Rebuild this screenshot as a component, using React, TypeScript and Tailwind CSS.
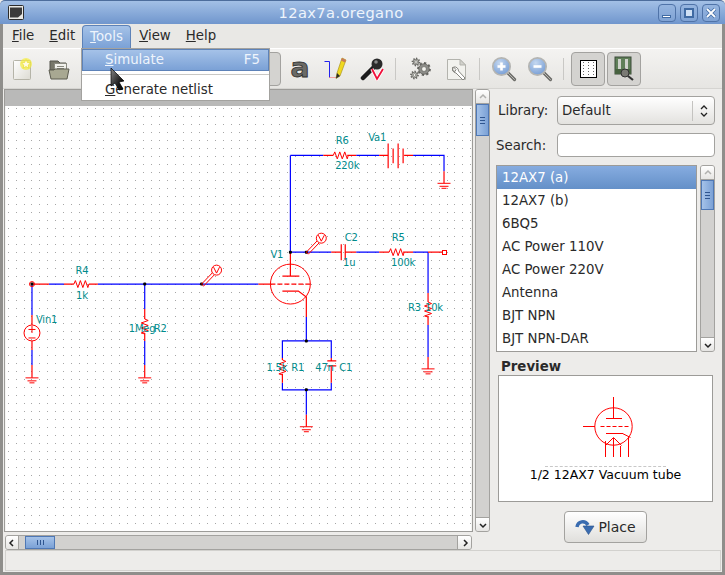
import { ReactNode } from "react";

const parts = [
  "12AX7 (a)",
  "12AX7 (b)",
  "6BQ5",
  "AC Power 110V",
  "AC Power 220V",
  "Antenna",
  "BJT NPN",
  "BJT NPN-DAR",
];

const RED = "#ff0000";
const BLUE = "#0000ff";
const TEAL = "#008b8b";

function Chevron({ dir }: { dir: "up" | "down" | "left" | "right" }) {
  const d = {
    up: "M2 6 L5 3 L8 6",
    down: "M2 4 L5 7 L8 4",
    left: "M6 2 L3 5 L6 8",
    right: "M4 2 L7 5 L4 8",
  }[dir];
  return (
    <svg width="10" height="10" viewBox="0 0 10 10">
      <path d={d} fill="none" stroke={dir === "up" ? "#b0b0ae" : "#222"} strokeWidth="1.5" />
    </svg>
  );
}

function VScroll({ top, height, grip = true }: { top: number; height: number; grip?: boolean }) {
  return (
    <div className="flex w-[15px] flex-col self-stretch overflow-hidden rounded-[3px] border border-[#a3a29f] bg-[#d2d1cf]">
      <div className="flex h-[14px] shrink-0 items-center justify-center border-b border-[#a3a29f] bg-linear-to-b from-white to-[#e6e5e3]">
        <Chevron dir="up" />
      </div>
      <div className="flex-1" style={{ paddingTop: top }}>
        <div
          className="flex flex-col items-center justify-center gap-[2px] border border-[#4f78b5] bg-linear-to-r from-[#a5c2e8] to-[#7ba1d6]"
          style={{ height }}
        >
          {grip && (
            <>
              <div className="h-px w-[5px] bg-[#2f558f]" />
              <div className="h-px w-[5px] bg-[#2f558f]" />
              <div className="h-px w-[5px] bg-[#2f558f]" />
            </>
          )}
        </div>
      </div>
      <div className="flex h-[14px] shrink-0 items-center justify-center border-t border-[#a3a29f] bg-linear-to-b from-white to-[#e6e5e3]">
        <Chevron dir="down" />
      </div>
    </div>
  );
}

function HScroll() {
  return (
    <div className="ml-px flex h-[15px] w-[467px] overflow-hidden rounded-[3px] border border-[#a3a29f] bg-[#d2d1cf]">
      <div className="flex w-[13px] shrink-0 items-center justify-center border-r border-[#a3a29f] bg-linear-to-b from-white to-[#e6e5e3]">
        <Chevron dir="left" />
      </div>
      <div className="ml-[6px] flex w-[30px] items-center justify-center gap-[2px] border border-[#4f78b5] bg-linear-to-b from-[#a5c2e8] to-[#7ba1d6]">
        <div className="h-[5px] w-px bg-[#2f558f]" />
        <div className="h-[5px] w-px bg-[#2f558f]" />
        <div className="h-[5px] w-px bg-[#2f558f]" />
      </div>
      <div className="flex-1" />
      <div className="flex w-[14px] shrink-0 items-center justify-center border-l border-[#a3a29f] bg-linear-to-b from-white to-[#e6e5e3]">
        <Chevron dir="right" />
      </div>
    </div>
  );
}

function Ground({ x, y }: { x: number; y: number }) {
  return (
    <path
      d={`M${x - 6.5} ${y}H${x + 6.5}M${x - 4.5} ${y + 3}H${x + 4.5}M${x - 2.5} ${y + 5}H${x + 2.5}`}
      stroke={RED}
      fill="none"
    />
  );
}

function ZigH({ x, y }: { x: number; y: number }) {
  return (
    <path
      d={`M${x} ${y}l1.5 -3.5l2.5 7l2.5 -7l2.5 7l2.5 -7l2.5 7l1 -3.5`}
      stroke={RED}
      fill="none"
    />
  );
}

function ZigV({ x, y }: { x: number; y: number }) {
  return (
    <path
      d={`M${x} ${y}l3.5 1.5l-7 2.5l7 2.5l-7 2.5l7 2.5l-7 2.5l3.5 1`}
      stroke={RED}
      fill="none"
    />
  );
}

function Junction({ x, y }: { x: number; y: number }) {
  return <rect x={x - 1.5} y={y - 1.5} width="3" height="3" rx="1" fill="#000" />;
}

function Probe({ x, y }: { x: number; y: number }) {
  return (
    <g stroke={RED} fill="none">
      <path d={`M${x} ${y}l11 -11.500M${x + 2} ${y + 2}l11 -11.500M${x} ${y}l2 2`} />
      <circle cx={x + 15} cy={y - 14} r="5" fill="#fff" />
      <path d={`M${x + 12} ${y - 17}l3 6l3 -6`} />
    </g>
  );
}

function Label({ x, y, children, anchor = "start" }: { x: number; y: number; children: ReactNode; anchor?: "start" | "middle" }) {
  return (
    <text x={x} y={y} fill={TEAL} fontSize="10" letterSpacing="-0.2" textAnchor={anchor}>
      {children}
    </text>
  );
}

const dotRows = Array.from({ length: 53 }, (_, i) => 108 + i * 8);

function Schematic() {
  // coordinates are window pixels, the viewBox offset puts integer values on pixel centres
  const blueWires =
    "M48 284H63M97 284H258M31 284V315M31 350V365M144 284V309M144 341V365" +
    "M290 155V252M290 155H323M356 155H379M413 155H444V171" +
    "M290 252H331M356 252H379M413 252H428M428 252V293M428 325V357" +
    "M306 317V341M282 358V341H331V358M282 383V390H331V383M306 390V415";
  const redWires =
    "M31 284H48M63 284H73M88 284H97M31 315V325M31 341V350M31 365V378" +
    "M144 309V319M144 333V341M144 365V378" +
    "M323 155H333M347 155H356M379 155H388M404 155H413M444 171V183" +
    "M388 143V168M393 148V163M398 143V168M403 148V163" +
    "M331 252H341M345 252H356M341 244V260M345 244V260" +
    "M379 252H389M403 252H413M428 252H442M428 293V302M428 316V325M428 357V369" +
    "M290 252V276M282 276H299M258 284H270M282 291H298L306 297V317" +
    "M282 358V360M282 374V383M331 358V361M327 361H336M327 366H336M331 366V383M306 415V427";
  return (
    <svg className="block h-[426px] w-[467px]" viewBox="4.5 105.500 467 426" fontFamily="'DejaVu Sans', sans-serif">
      <rect x="4.5" y="105.500" width="467" height="426" fill="#fff" />
      <g stroke="#a6a6a6" strokeDasharray="1 7" shapeRendering="crispEdges">
        {dotRows.map((y) => (
          <path key={y} d={`M6.500 ${y}H472`} />
        ))}
      </g>

      <path d={blueWires} stroke={BLUE} strokeWidth="1.200" fill="none" />
      <path d={redWires} stroke={RED} strokeWidth="1.200" fill="none" />
      <path d="M270 284H311" stroke={RED} strokeWidth="1.200" fill="none" strokeDasharray="5 2" />

      <circle cx="290" cy="284" r="20" stroke={RED} fill="none" />
      <circle cx="31" cy="333" r="8" stroke={RED} fill="none" />
      <path d="M27.500 329.500h7M31 326v7M27.500 338h7" stroke={RED} fill="none" />
      <circle cx="31" cy="284" r="2.500" stroke={RED} fill="none" />
      <rect x="442" y="250" width="4" height="4" stroke={RED} fill="none" shapeRendering="crispEdges" />

      <ZigH x={73} y={284} />
      <ZigH x={333} y={155} />
      <ZigH x={389} y={252} />
      <ZigV x={144} y={319} />
      <ZigV x={428} y={302} />
      <ZigV x={282} y={360} />

      <Ground x={31} y={378} />
      <Ground x={144} y={378} />
      <Ground x={444} y={183} />
      <Ground x={428} y={369} />
      <Ground x={306} y={427} />

      <Junction x={31} y={284} />
      <Junction x={144} y={284} />
      <Junction x={201} y={284} />
      <Junction x={290} y={252} />
      <Junction x={306} y={252} />
      <Junction x={306} y={341} />
      <Junction x={306} y={390} />

      <Probe x={201} y={284} />
      <Probe x={306} y={252} />

      <Label x={81} y={274} anchor="middle">R4</Label>
      <Label x={81} y={299} anchor="middle">1k</Label>
      <Label x={35} y={323}>Vin1</Label>
      <Label x={128} y={332}>1Meg</Label>
      <Label x={153} y={332}>R2</Label>
      <Label x={342} y={144} anchor="middle">R6</Label>
      <Label x={347} y={169} anchor="middle">220k</Label>
      <Label x={368} y={141}>Va1</Label>
      <Label x={270} y={258}>V1</Label>
      <Label x={351} y={241} anchor="middle">C2</Label>
      <Label x={349} y={266} anchor="middle">1u</Label>
      <Label x={398} y={241} anchor="middle">R5</Label>
      <Label x={403} y={266} anchor="middle">100k</Label>
      <Label x={408} y={311}>R3</Label>
      <Label x={425} y={311}>10k</Label>
      <Label x={266} y={371}>1.5k</Label>
      <Label x={291} y={371}>R1</Label>
      <Label x={315} y={371}>47n</Label>
      <Label x={339} y={371}>C1</Label>
    </svg>
  );
}

function NewIcon() {
  return (
    <svg width="24" height="24" viewBox="0 0 24 24">
      <defs>
        <linearGradient id="pg" x1="0" y1="0" x2="1" y2="1">
          <stop offset="0" stopColor="#fff" />
          <stop offset="1" stopColor="#dcdbd2" />
        </linearGradient>
      </defs>
      <rect x="2.500" y="3.500" width="17" height="19" rx="1" fill="url(#pg)" stroke="#b5b4a8" />
      <circle cx="15" cy="7" r="6" fill="#f5ee3c" opacity="0.7" />
      <path d="M15 2.500l1.400 3 3.100.4-2.300 2.100.6 3.100-2.800-1.600-2.800 1.600.6-3.100-2.300-2.100 3.100-.4z" fill="#fffbe0" stroke="#e8d820" strokeWidth="0.6" />
    </svg>
  );
}

function FolderIcon() {
  return (
    <svg width="24" height="24" viewBox="0 0 24 24">
      <path d="M3 4h8l2 2h6v7H3z" fill="#77776a" stroke="#55554c" />
      <rect x="7.500" y="6.500" width="12" height="10" fill="#f1f1ec" stroke="#8a8a80" />
      <path d="M10 9.500h7M10 11.500h7M10 13.500h7" stroke="#8a8a80" />
      <path d="M2 13h5l1 -1h14l-2 10H4z" fill="#a8a892" stroke="#5c5c50" />
    </svg>
  );
}

function LetterIcon() {
  return (
    <svg width="26" height="26" viewBox="0 0 26 26" className="overflow-visible">
      <text x="13" y="21" textAnchor="middle" fontSize="26" fontWeight="700" textLength="19" lengthAdjust="spacingAndGlyphs" fontFamily="'DejaVu Sans', sans-serif" fill="#6a6a66" stroke="#2f2f2d" strokeWidth="0.8">
        a
      </text>
    </svg>
  );
}

function WireIcon() {
  return (
    <svg width="24" height="24" viewBox="0 0 24 24">
      <path d="M0.500 4.500H5.500V20.500" fill="none" stroke="#2222ee" />
      <path d="M5.500 20.500H13" fill="none" stroke="#ff5555" strokeDasharray="1 1" />
      <path d="M18 1l4 2L16 19l-4 2.500L13 16z" fill="#f0d820" stroke="#a08a10" strokeWidth="0.6" />
      <path d="M18 1l4 2-1 2.500-4-2z" fill="#c87a5a" />
      <path d="M13 16l3 3-4 2.500z" fill="#2c2c2c" />
    </svg>
  );
}

function ProbeIcon() {
  return (
    <svg width="24" height="24" viewBox="0 0 24 24">
      <path d="M3 21L14 10" stroke="#1c1c1c" strokeWidth="4.500" strokeLinecap="round" />
      <circle cx="17" cy="7" r="5.500" fill="#2a2a2a" />
      <circle cx="16" cy="5" r="1.800" fill="#888" />
      <path d="M12 12l5 10 6-10" fill="none" stroke="#fff" strokeWidth="3.500" />
      <path d="M12 12l5 10 6-10" fill="none" stroke="#f0103a" strokeWidth="1.800" />
    </svg>
  );
}

function Gear({ cx, cy, r, fill }: { cx: number; cy: number; r: number; fill: string }) {
  return (
    <g>
      <circle cx={cx} cy={cy} r={r} fill="none" stroke="#666662" strokeWidth="1.800" pathLength={16} strokeDasharray="1 1" />
      <circle cx={cx} cy={cy} r={r - 0.7} fill={fill} stroke="#55554f" strokeWidth="0.7" />
      <circle cx={cx} cy={cy} r={r * 0.4} fill="#f4f4f0" stroke="#55554f" strokeWidth="0.6" />
    </g>
  );
}

function GearsIcon() {
  return (
    <svg width="24" height="24" viewBox="0 0 24 24">
      <Gear cx={8} cy={5} r={3.5} fill="#c8c8c4" />
      <Gear cx={6.500} cy={18} r={3.5} fill="#c8c8c4" />
      <Gear cx={16} cy={12} r={6} fill="#8d8d89" />
    </svg>
  );
}

function ToolDocIcon() {
  return (
    <svg width="24" height="24" viewBox="0 0 24 24">
      <path d="M3.500 2.500H16L21.500 8V22.500H3.500z" fill="#f2f2ee" stroke="#b3b3ad" />
      <path d="M16 2.500V8H21.500z" fill="#d2d2cc" stroke="#b3b3ad" />
      <path d="M9 10a4 4 0 0 0 3 6l7 7 2-2-6.500-7a4 4 0 0 0-5-4l2.500 2.500-1 2-2.500-1z" fill="#fff" stroke="#85857f" />
    </svg>
  );
}

function ZoomIcon({ minus }: { minus?: boolean }) {
  const id = minus ? "zo" : "zi";
  return (
    <svg width="26" height="26" viewBox="0 0 26 26">
      <defs>
        <radialGradient id={id} cx="0.4" cy="0.3" r="0.8">
          <stop offset="0" stopColor="#c5d8f0" />
          <stop offset="1" stopColor="#6e97d2" />
        </radialGradient>
      </defs>
      <path d="M16 16l7.500 7.500" stroke="#6c6c68" strokeWidth="3.200" strokeLinecap="round" />
      <path d="M16.500 16.500l7 7" stroke="#b8b8b4" strokeWidth="1" strokeLinecap="round" />
      <circle cx="10.500" cy="10.500" r="8.700" fill={`url(#${id})`} stroke="#b5b5b2" strokeWidth="1.700" />
      <path d="M6.500 10.500H14.500" stroke="#fff" strokeWidth="2.600" />
      {!minus && <path d="M10.500 6.500V14.500" stroke="#fff" strokeWidth="2.600" />}
    </svg>
  );
}

function GridIcon() {
  return (
    <svg width="17" height="18" viewBox="0 0 17 18">
      <rect x="0.500" y="0.500" width="16" height="17" fill="#fff" stroke="#000" />
      {[3.500, 8.500, 13.500].map((x) =>
        [2.500, 5.500, 8.500, 11.500, 14.500].map((y) => <rect key={`${x}-${y}`} x={x - 0.5} y={y - 0.5} width="1" height="1" fill="#666" />),
      )}
    </svg>
  );
}

function BoardIcon() {
  return (
    <svg width="24" height="26" viewBox="0 0 24 26">
      <rect x="3" y="1" width="16" height="17" fill="#5f7f58" stroke="#3b4a38" />
      <rect x="6" y="3" width="3" height="10" fill="#cfd2cc" />
      <rect x="13" y="3" width="3" height="10" fill="#cfd2cc" />
      <path d="M3 13h16v5H3z" fill="#47623f" />
      <circle cx="13" cy="17" r="4" fill="#7a7a74" stroke="#333" />
      <path d="M16 20l5 4" stroke="#333" strokeWidth="2.200" />
    </svg>
  );
}

function Separator() {
  return <div className="ml-[5px] mr-[6px] h-[22px] w-px self-center bg-[#c9c8c5]" />;
}

function ToolButton({ children, active }: { children?: ReactNode; active?: boolean }) {
  return (
    <div className={active ? "flex h-[34px] w-[34px] items-center justify-center rounded-[4px] border border-[#a3a29f] bg-[#d4d3d0]" : "flex h-[34px] w-[36px] items-center justify-center"}>
      {children}
    </div>
  );
}

function WinButton({ children }: { children: ReactNode }) {
  return (
    <div className="flex h-[18px] w-[18px] items-center justify-center rounded-[4px] border border-[#4f73a8] bg-[#8eb0dc]/40">
      {children}
    </div>
  );
}

function Cursor() {
  return (
    <svg className="absolute left-[110px] top-[67px]" width="16" height="24" viewBox="0 0 16 24">
      <defs>
        <linearGradient id="cur" x1="0" y1="0" x2="1" y2="1">
          <stop offset="0" stopColor="#8a8a8a" />
          <stop offset="0.7" stopColor="#111" />
        </linearGradient>
      </defs>
      <path d="M1 1L14 14L9 15L13 22L9 23L5 16L1 19z" fill="url(#cur)" stroke="#000" strokeWidth="0.7" />
    </svg>
  );
}

function PreviewTube() {
  return (
    <svg width="65" height="64" viewBox="580.500 394.500 65 64" className="ml-[16px] block">
      <g stroke={RED} fill="none" shapeRendering="crispEdges">
        <path d="M613 396V418M605 418H621M582 426H594M605 433H622M605 440V456M613 437V456M620 445V456M628 436V456" />
      </g>
      <path d="M600 426H630" stroke={RED} fill="none" strokeDasharray="4 2" />
      <circle cx="613" cy="426" r="18.700" stroke={RED} fill="none" />
      <path d="M605 445L613 437L621 445M622 433L630 437" stroke={RED} fill="none" />
    </svg>
  );
}

export default function App() {
  return (
    <div className="relative flex h-[575px] w-[725px] flex-col overflow-hidden bg-[#edecea] font-['DejaVu_Sans',sans-serif] text-[13.33px] text-[#2a2a2a]">
      {/* title bar */}
      <div className="flex h-[24px] shrink-0 items-center justify-between rounded-t-[5px] border-t border-[#4d6d9c] bg-linear-to-b from-[#a3c0e6] to-[#7096cd] pl-[8px] pr-[5px]">
        <svg width="16" height="15" viewBox="0 0 16 15">
          <rect x="0.500" y="0.500" width="15" height="14" rx="1" fill="#e8e8e4" stroke="#2b2b2b" />
          <path d="M2 2.500H14V9L10 12.500H2z" fill="#3a3a3a" />
        </svg>
        <span className="text-[14.67px] tracking-[0.4px] text-[#eef4fc]">12ax7a.oregano</span>
        <div className="flex gap-[4px]">
          <WinButton>
            <div className="mt-[8px] h-[3px] w-[9px] border border-[#3f6aa3] bg-white" />
          </WinButton>
          <WinButton>
            <div className="h-[10px] w-[10px] border-2 border-[#3f6aa3] bg-[#cfe0f5]" />
          </WinButton>
          <WinButton>
            <svg width="12" height="12" viewBox="0 0 12 12">
              <path d="M2 2L10 10M10 2L2 10" stroke="#3f6aa3" strokeWidth="3.200" />
              <path d="M2 2L10 10M10 2L2 10" stroke="#fff" strokeWidth="1.800" />
            </svg>
          </WinButton>
        </div>
      </div>

      <div className="flex min-h-0 flex-1 flex-col border-x-[3px] border-b-[3px] border-[#8f8e8b]">
        {/* menu bar */}
        <div className="flex h-[24px] shrink-0 items-center gap-[15px] bg-[#e9e8e5] pl-[9px]">
          <span><u>F</u>ile</span>
          <span><u>E</u>dit</span>
          <span className="ml-[1px] w-[31px]" />
          <span className="ml-[2px]"><u>V</u>iew</span>
          <span><u>H</u>elp</span>
        </div>

        {/* toolbar */}
        <div className="flex h-[41px] shrink-0 items-center border-y border-y-[#d5d4d1] border-t-white bg-linear-to-b from-[#f4f3f1] to-[#e6e5e2] pl-[2px]">
          <ToolButton><NewIcon /></ToolButton>
          <ToolButton><FolderIcon /></ToolButton>
          <div className="w-[170px]" />
          <ToolButton active />
          <div className="ml-px" />
          <ToolButton><LetterIcon /></ToolButton>
          <ToolButton><WireIcon /></ToolButton>
          <ToolButton><ProbeIcon /></ToolButton>
          <Separator />
          <ToolButton><GearsIcon /></ToolButton>
          <ToolButton><ToolDocIcon /></ToolButton>
          <Separator />
          <ToolButton><ZoomIcon /></ToolButton>
          <ToolButton><ZoomIcon minus /></ToolButton>
          <Separator />
          <div className="ml-px flex gap-[2px]">
            <ToolButton active><GridIcon /></ToolButton>
            <ToolButton active><BoardIcon /></ToolButton>
          </div>
        </div>

        {/* main */}
        <div className="flex h-[461px] shrink-0">
          <div className="ml-px flex w-[486px] shrink-0 flex-col">
            <div className="flex h-[443px] gap-[2px]">
              <div className="flex w-[469px] flex-col border border-[#9c9b98]">
                <div className="h-[16px] shrink-0 bg-[#b9b9b8]" />
                <Schematic />
              </div>
              <VScroll top={0} height={32} />
            </div>
            <div className="mt-[3px]">
              <HScroll />
            </div>
          </div>

          <div className="ml-[6px] flex w-[219px] flex-col">
            <div className="mt-[7px] flex h-[29px] items-center justify-between">
              <span className="ml-[2px]">Library:</span>
              <div className="flex h-[29px] w-[158px] items-center justify-between rounded-[4px] border border-[#a3a29f] bg-linear-to-b from-white to-[#e3e2df] pl-[4px]">
                <span>Default</span>
                <div className="flex h-[20px] w-[22px] flex-col items-center justify-center border-l border-[#c4c3c0]">
                  <svg width="10" height="14" viewBox="0 0 10 14">
                    <path d="M2 5L5 2L8 5M2 9L5 12L8 9" fill="none" stroke="#222" strokeWidth="1.300" />
                  </svg>
                </div>
              </div>
            </div>
            <div className="mt-[8px] flex h-[24px] items-center justify-between">
              <span className="pt-px">Search:</span>
              <div className="h-[24px] w-[158px] rounded-[4px] border border-[#a3a29f] bg-white" />
            </div>
            <div className="mt-[8px] flex h-[187px] gap-[3px]">
              <div className="w-[201px] overflow-hidden border border-[#9c9b98] bg-white">
                {parts.map((name, i) => (
                  <div
                    key={name}
                    className={i === 0 ? "flex h-[23px] items-center bg-linear-to-b from-[#86ace0] to-[#6490c8] pl-[5px] text-white" : "flex h-[23px] items-center pl-[5px]"}
                  >
                    {name}
                  </div>
                ))}
              </div>
              <VScroll top={0} height={30} />
            </div>
            <div className="ml-[5px] mt-[6px] h-[17px] font-bold leading-[17px]">Preview</div>
            <div className="ml-[2px] flex h-[127px] w-[215px] flex-col items-center border border-[#9c9b98] bg-white pt-[19px]">
              <PreviewTube />
              <div className="mt-[7px] w-[121px] border-t border-dashed border-[#c8c8c8]" />
              <span className="whitespace-nowrap text-[12.5px] leading-[15px] text-black">1/2 12AX7 Vacuum tube</span>
            </div>
            <div className="mt-[9px] flex justify-center">
              <div className="flex h-[32px] w-[83px] items-center justify-center gap-[3px] rounded-[4px] border border-[#a3a29f] bg-linear-to-b from-white to-[#e0dfdc] text-[14px]">
                <svg width="20" height="18" viewBox="0 0 20 18">
                  <path d="M2 9C3 3 10 2 13 7" fill="none" stroke="#3a6cb0" strokeWidth="3.500" />
                  <path d="M8 8H19L13.500 16.500z" fill="#3a6cb0" stroke="#28508a" strokeWidth="0.6" />
                </svg>
                <span>Place</span>
              </div>
            </div>
          </div>
        </div>

        {/* status bar */}
        <div className="ml-[2px] h-[21px] w-[716px] shrink-0 border border-[#d2d1ce] bg-[#edecea]" />
      </div>

      {/* open Tools menu */}
      <div className="absolute left-[82px] top-[25px] flex h-[23px] w-[49px] items-center justify-center rounded-t-[4px] border border-b-0 border-[#5d82b8] bg-linear-to-b from-[#a5c2e8] to-[#7ba1d6] text-[#eef4fc]">
        <span><u>T</u>ools</span>
      </div>
      <div className="absolute left-[81px] top-[48px] flex h-[53px] w-[189px] flex-col border border-[#a3a29f] bg-white">
        <div className="flex h-[22px] items-center justify-between border border-[#5d82b8] bg-linear-to-b from-[#a5c2e8] to-[#7ba1d6] pl-[22px] pr-[8px] text-[#eef4fc]">
          <span><u>S</u>imulate</span>
          <span>F5</span>
        </div>
        <div className="mt-[3px] h-px bg-[#c9c8c5]" />
        <div className="flex flex-1 items-center pl-[23px] pt-[5px]">
          <span><u>G</u>enerate netlist</span>
        </div>
      </div>
      <Cursor />
    </div>
  );
}
